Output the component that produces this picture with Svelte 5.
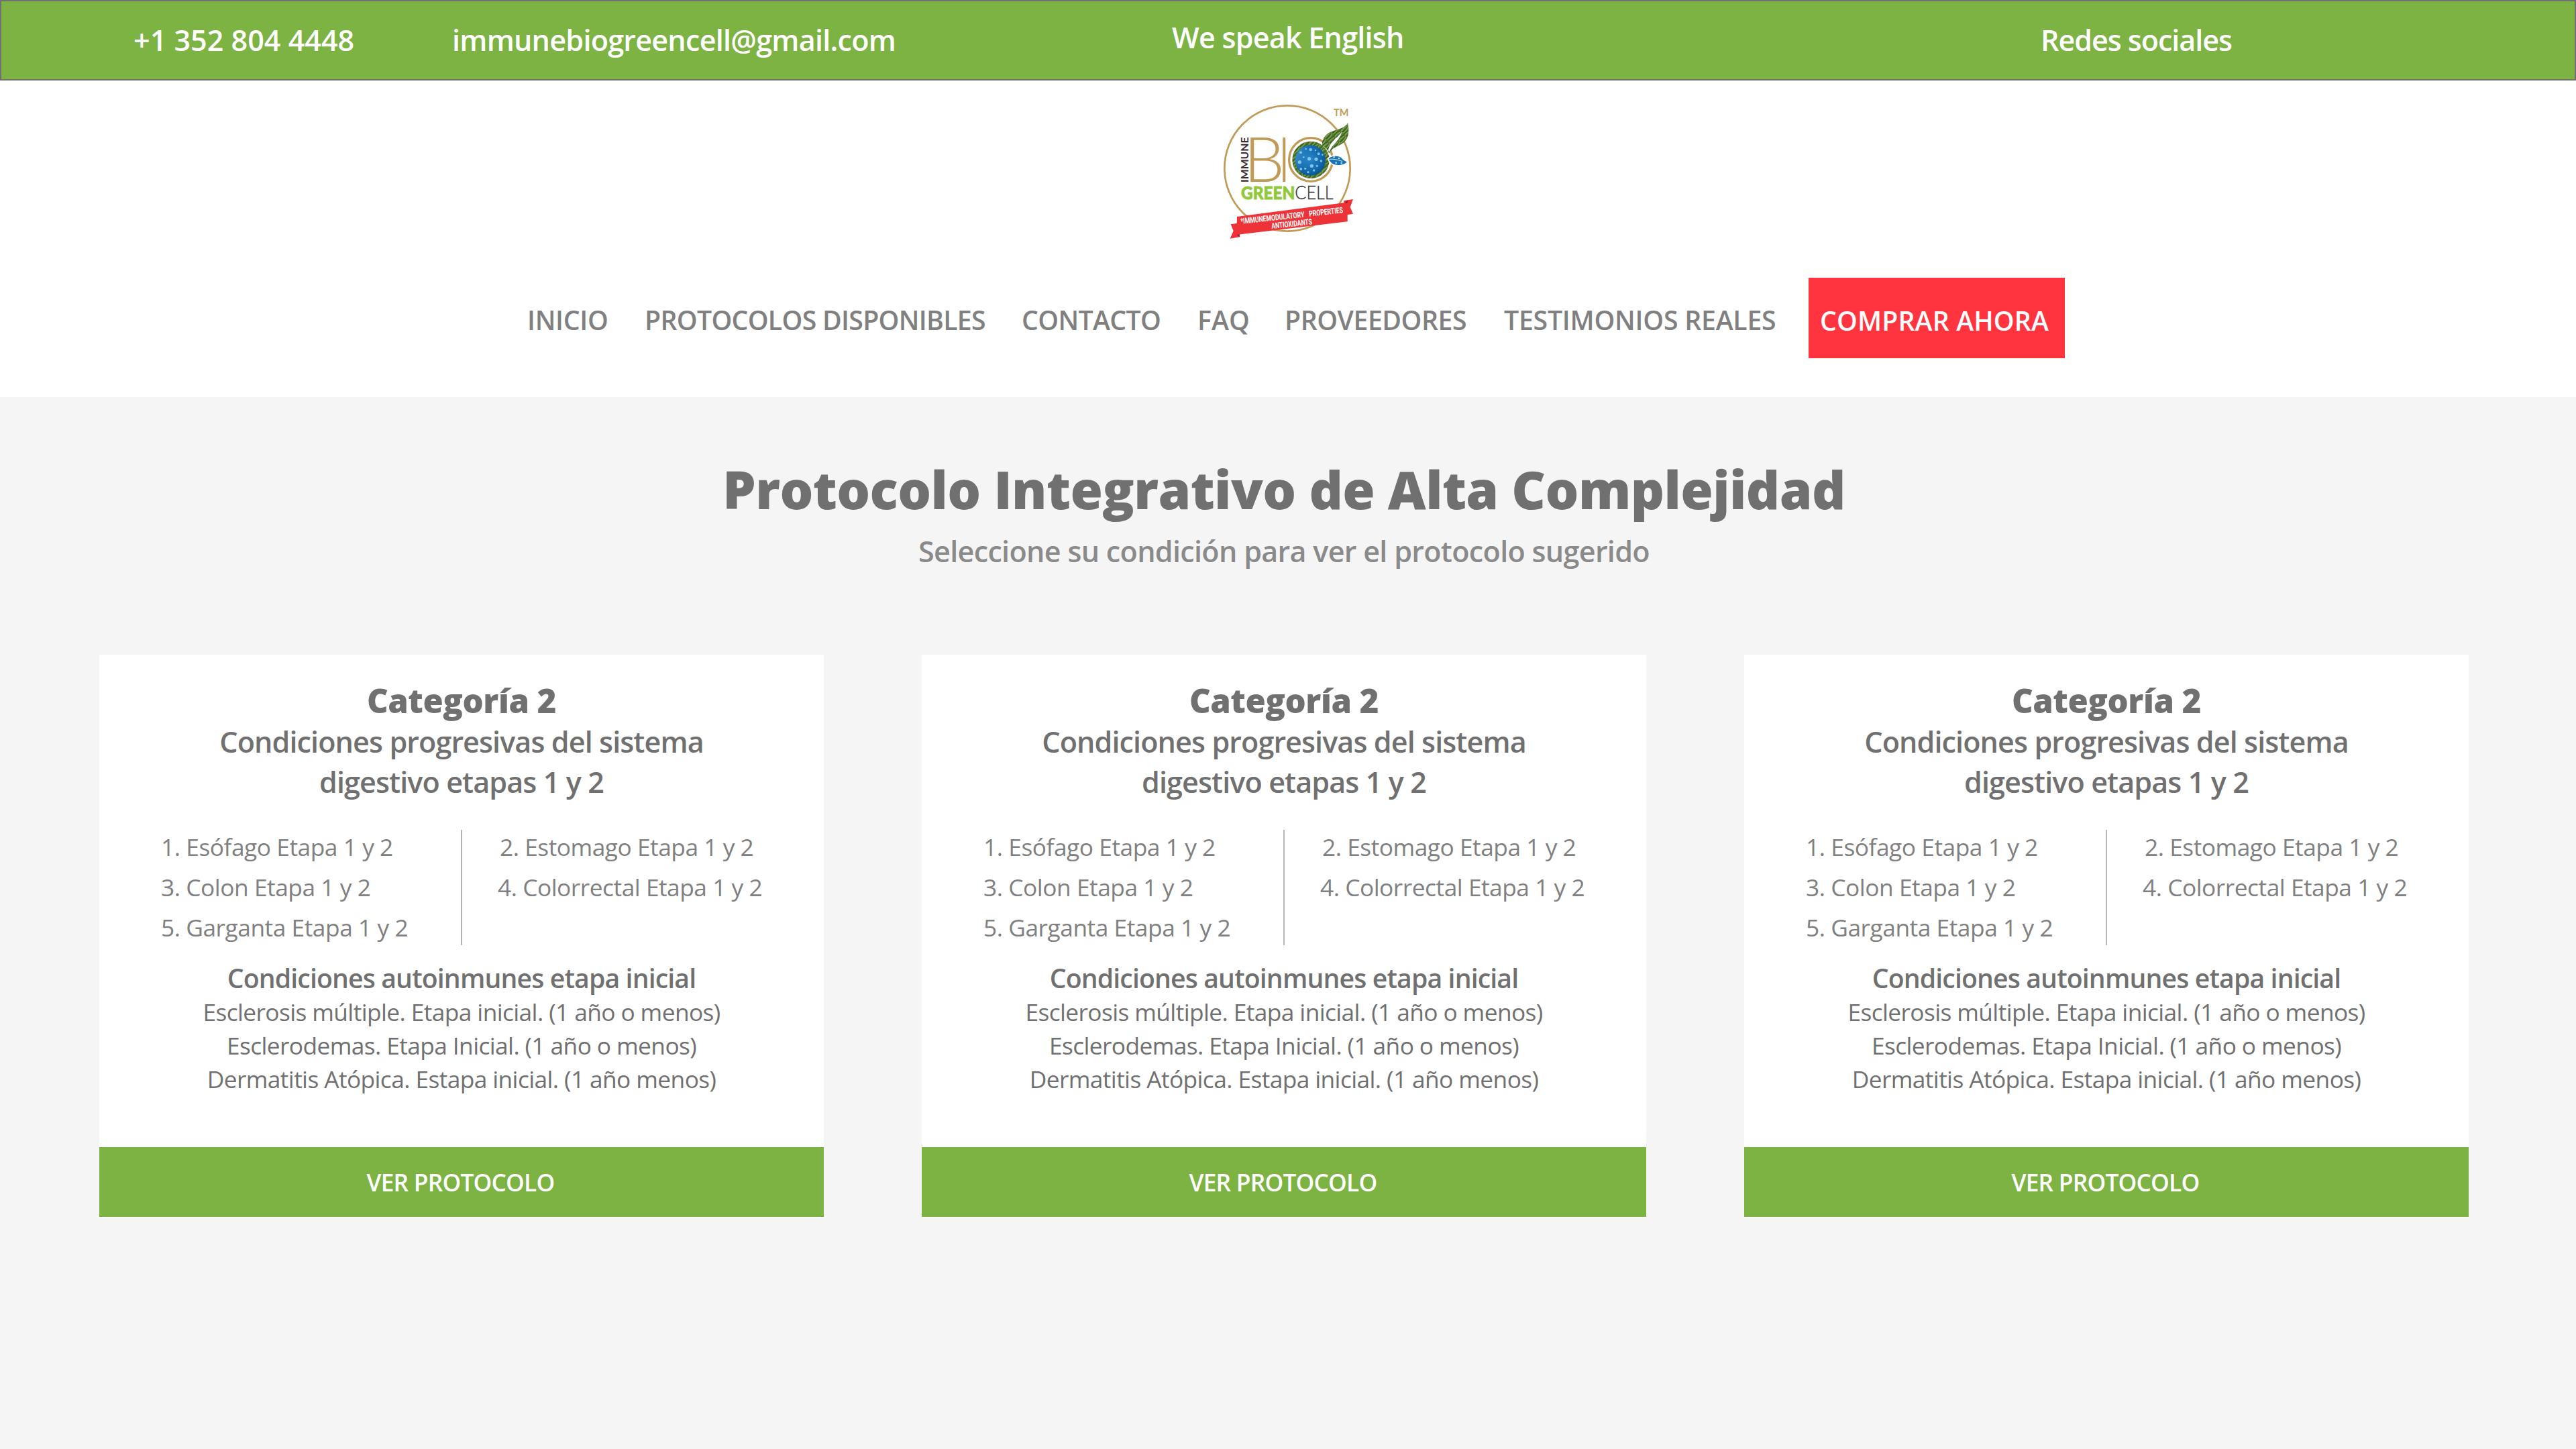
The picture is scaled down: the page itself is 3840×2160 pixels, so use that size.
<script>
  const nav = [
    { label: 'INICIO', key: 'home' },
    { label: 'PROTOCOLOS DISPONIBLES', key: 'protocols' },
    { label: 'CONTACTO', key: 'contact' },
    { label: 'FAQ', key: 'faq' },
    { label: 'PROVEEDORES', key: 'providers' },
    { label: 'TESTIMONIOS REALES', key: 'testimonials' }
  ];

  const category = {
    title: 'Categoría 2',
    lines: ['Condiciones progresivas del sistema', 'digestivo etapas 1 y 2'],
    left: ['1. Esófago Etapa 1 y 2', '3. Colon Etapa 1 y 2', '5. Garganta Etapa 1 y 2'],
    right: ['2. Estomago Etapa 1 y 2', '4. Colorrectal Etapa 1 y 2'],
    subtitle: 'Condiciones autoinmunes etapa inicial',
    notes: [
      'Esclerosis múltiple. Etapa inicial. (1 año o menos)',
      'Esclerodemas. Etapa Inicial. (1 año o menos)',
      'Dermatitis Atópica. Estapa inicial. (1 año menos)'
    ]
  };
  const cards = [category, category, category];

  const bubbles = [
    [417, 262, 6], [440, 246, 4], [461, 249, 7], [483, 252, 4], [497, 268, 6], [514, 272, 4],
    [455, 290, 8], [486, 292, 8], [508, 300, 5], [412, 305, 8], [466, 322, 8], [490, 322, 5],
    [437, 334, 5], [418, 336, 6], [450, 350, 5], [476, 342, 5], [430, 283, 4]
  ];
</script>

<div class="page">
  <div class="topbar">
    <span class="phone">+1 352 804 4448</span>
    <span class="mail">immunebiogreencell@gmail.com</span>
    <span class="lang">We speak English</span>
    <span class="social">Redes sociales</span>
  </div>

  <header>
    <svg class="logo" viewBox="0 0 720 690" role="img" aria-label="Immune Bio Greencell">
      <defs>
        <radialGradient id="berry" cx="0.45" cy="0.45" r="0.6">
          <stop offset="0" stop-color="#2a86c8" />
          <stop offset="0.7" stop-color="#1168ab" />
          <stop offset="1" stop-color="#0c4f8c" />
        </radialGradient>
        <linearGradient id="shine" x1="0" y1="0" x2="1" y2="0.4">
          <stop offset="0" stop-color="#6db8e6" stop-opacity="0.75" />
          <stop offset="0.5" stop-color="#2a86c8" stop-opacity="0" />
        </linearGradient>
        <pattern id="grass" width="37" height="26" patternUnits="userSpaceOnUse" patternTransform="rotate(-42)">
          <rect width="37" height="26" fill="#557d31" />
          <path d="M0 4 Q18 -2 37 7 M0 15 Q14 20 37 10" stroke="#9ab562" stroke-width="3" fill="none" />
          <path d="M0 9 Q17 14 37 5 M0 20 L37 24" stroke="#2a4d17" stroke-width="3" fill="none" />
        </pattern>
      </defs>

      <circle cx="357" cy="333" r="281" fill="none" stroke="#c19a56" stroke-width="8" />
      <text class="tm" x="564" y="98" textLength="67" lengthAdjust="spacingAndGlyphs">TM</text>
      <text class="immune" transform="translate(184 396) rotate(-90)" textLength="203" lengthAdjust="spacingAndGlyphs">IMMUNE</text>
      <text class="bio" x="163" y="393" textLength="182" lengthAdjust="spacingAndGlyphs">B</text>
      <text class="bio" x="313" y="393" textLength="60" lengthAdjust="spacingAndGlyphs">I</text>

      <circle cx="462" cy="294" r="97" fill="#fff" stroke="#c19a56" stroke-width="10" />
      <circle cx="462" cy="295" r="83" fill="url(#grass)" />
      <circle cx="460" cy="297" r="68" fill="url(#berry)" />
      <circle cx="460" cy="297" r="68" fill="url(#shine)" />
      {#each bubbles as [x, y, r]}
        <circle cx={x} cy={y} {r} fill="#8fd0f2" fill-opacity="0.85" />
      {/each}

      <path d="M512 230 C512 190 538 170 576 161 C602 154 616 148 628 130 C634 165 632 192 618 208 C596 236 560 234 544 266 C537 250 528 238 512 230Z" fill="url(#grass)" />
      <path d="M541 256 C540 222 574 202 600 170 C592 210 556 224 546 258Z" fill="#fff" />
      <path d="M538 290 C552 272 588 272 600 284 C610 296 618 300 628 303 C612 324 572 325 554 312 C547 306 542 300 538 290Z" fill="#1872b4" stroke="#fff" stroke-width="5" />
      <path d="M544 292 C562 290 584 294 604 302" fill="none" stroke="#d8effb" stroke-width="3" />
      <circle cx="566" cy="283" r="4" fill="#a9dcf5" />
      <circle cx="588" cy="288" r="4" fill="#a9dcf5" />
      <circle cx="575" cy="308" r="4" fill="#a9dcf5" />
      <circle cx="599" cy="309" r="4" fill="#a9dcf5" />

      <text class="green" x="150" y="470" textLength="241" lengthAdjust="spacingAndGlyphs">GREEN</text>
      <text class="cell" x="391" y="470" textLength="172" lengthAdjust="spacingAndGlyphs">CELL</text>

      <path d="M104 583 L146 577 L143 640 L101 647 L116 613Z" fill="#ee3338" />
      <path d="M610 477 L651 471 L638 506 L651 536 L610 543Z" fill="#ee3338" />
      <path d="M130 628 L143 628 L143 641Z M611 489 L626 476 L626 489Z" fill="#98191d" />
      <path d="M132 549 L610 487 L626 489 L626 571 L130 630Z" fill="#ee3338" />
      <text class="ribbon" transform="translate(149 582) rotate(-6.2)" textLength="287" lengthAdjust="spacingAndGlyphs">*IMMUNEMODULATORY</text>
      <text class="ribbon" transform="translate(455 548) rotate(-6.2)" textLength="153" lengthAdjust="spacingAndGlyphs">PROPERTIES</text>
      <text class="ribbon" transform="translate(287 603) rotate(-6.2)" textLength="183" lengthAdjust="spacingAndGlyphs">ANTIOXIDANTS</text>
    </svg>

    <nav>
      {#each nav as item}
        <a class={item.key}>{item.label}</a>
      {/each}
      <button class="buy">COMPRAR AHORA</button>
    </nav>
  </header>

  <main>
    <h1>Protocolo Integrativo de Alta Complejidad</h1>
    <p class="lead">Seleccione su condición para ver el protocolo sugerido</p>

    <div class="cards">
      {#each cards as card}
        <article>
          <h2>{card.title}</h2>
          {#each card.lines as line}
            <p class="line">{line}</p>
          {/each}
          <div class="lists">
            <ul class="left">
              {#each card.left as item}<li>{item}</li>{/each}
            </ul>
            <ul class="right">
              {#each card.right as item}<li>{item}</li>{/each}
            </ul>
          </div>
          <h3>{card.subtitle}</h3>
          {#each card.notes as note}
            <p class="note">{note}</p>
          {/each}
          <button class="view">VER PROTOCOLO</button>
        </article>
      {/each}
    </div>
  </main>
</div>

<style>
  :global(body) {
    margin: 0;
    background: #f5f5f5;
  }

  .page {
    width: 3840px;
    height: 2160px;
    overflow: hidden;
    background: #f5f5f5;
    color: #707070;
    font-family: "Open Sans", "Noto Sans", sans-serif;
    white-space: nowrap;
  }

  h1, h2, h3, p, ul {
    margin: 0;
    padding: 0;
    font-weight: 400;
  }

  ul {
    list-style: none;
  }

  button {
    padding: 0;
    border: 0;
    color: #fff;
    font-family: inherit;
    font-weight: 600;
  }

  /* Top bar */
  .topbar {
    box-sizing: border-box;
    height: 120px;
    display: grid;
    grid-template-columns: 475px 1070px 1298px auto;
    padding-left: 197px;
    border: 2px solid #707070;
    background: #7cb342;
    color: #fff;
    font-size: 43.1px;
    font-weight: 600;
    line-height: 116px;
  }

  .phone { letter-spacing: 0; }
  .mail { letter-spacing: -0.75px; }
  .lang { letter-spacing: -0.77px; line-height: 108px; padding-left: 3px; }
  .social { letter-spacing: -1.06px; }

  /* Header */
  header {
    height: 472px;
    display: flex;
    flex-direction: column;
    background: #fff;
  }

  .logo {
    width: 240px;
    height: 230px;
    margin: 20px 0 0 1800px;
  }

  .logo text { font-family: Lato, "Open Sans", sans-serif; }
  .logo .tm { font-size: 46px; font-weight: 700; fill: #c19a56; }
  .logo .immune { font-size: 45px; font-weight: 700; fill: #3b2c31; }
  .logo .bio { font-size: 277px; font-weight: 300; fill: #c19a56; }
  .logo .green { font-size: 79px; font-weight: 900; fill: #92c83e; stroke: #92c83e; stroke-width: 2.5px; }
  .logo .cell { font-size: 80px; font-weight: 300; fill: #37363a; stroke: #37363a; stroke-width: 1px; }
  .logo .ribbon { font-family: Roboto, sans-serif; font-size: 36px; font-weight: 700; fill: #fff; }

  nav {
    display: flex;
    align-items: flex-start;
    margin: 44px 0 0 786px;
    font-size: 39.2px;
    font-weight: 600;
    line-height: 126px;
    color: #808080;
  }

  .home { width: 175px; letter-spacing: -0.28px; }
  .protocols { width: 562px; letter-spacing: -0.68px; }
  .contact { width: 262px; letter-spacing: -0.63px; }
  .faq { width: 130px; letter-spacing: 0.11px; }
  .providers { width: 327px; letter-spacing: -0.46px; }
  .testimonials { width: 454px; letter-spacing: -0.22px; }

  .buy {
    width: 382px;
    height: 120px;
    padding: 6px 7px 0 0;
    background: #ff343f;
    font-size: 39.2px;
    letter-spacing: 0.15px;
  }

  /* Content */
  main {
    padding: 79px 160px 0 148px;
    text-align: center;
  }

  h1 {
    font-size: 78.4px;
    font-weight: 800;
    line-height: 116px;
    letter-spacing: -0.6px;
  }

  .lead {
    color: #8a8a8a;
    font-size: 43.1px;
    font-weight: 600;
    line-height: 70px;
    letter-spacing: -0.69px;
  }

  .cards {
    display: grid;
    grid-template-columns: repeat(3, 1080px);
    column-gap: 146px;
    margin-top: 119px;
  }

  article {
    box-sizing: border-box;
    height: 840px;
    display: flex;
    flex-direction: column;
    padding: 38px 0 2px;
    background: #fff;
  }

  h2 {
    margin-bottom: 2px;
    font-size: 49px;
    font-weight: 800;
    line-height: 60px;
    letter-spacing: -0.43px;
  }

  .line {
    font-size: 43.1px;
    font-weight: 600;
    line-height: 60px;
    letter-spacing: -0.9px;
  }

  .lists {
    display: grid;
    grid-template-columns: 541px 1fr;
    margin: 41px 0 24px;
    color: #808080;
    font-size: 35.3px;
    line-height: 60px;
    text-align: left;
  }

  .left {
    height: 166px;
    padding: 0 0 6px 92px;
    border-right: 2px solid #b7b7b7;
    letter-spacing: -0.46px;
  }

  .left li, .right li {
    height: 60px;
    line-height: 51px;
  }

  .right {
    padding-left: 53px;
    letter-spacing: -0.48px;
  }

  .right li:first-child { padding-left: 3px; }

  h3 {
    font-size: 39.2px;
    font-weight: 600;
    line-height: 50px;
    letter-spacing: -0.87px;
  }

  .note {
    font-size: 35.3px;
    line-height: 50px;
    letter-spacing: -0.6px;
  }

  .view {
    width: 100%;
    height: 104px;
    margin-top: auto;
    padding-right: 3px;
    background: #7cb342;
    font-size: 35.3px;
    letter-spacing: -0.79px;
  }
</style>
